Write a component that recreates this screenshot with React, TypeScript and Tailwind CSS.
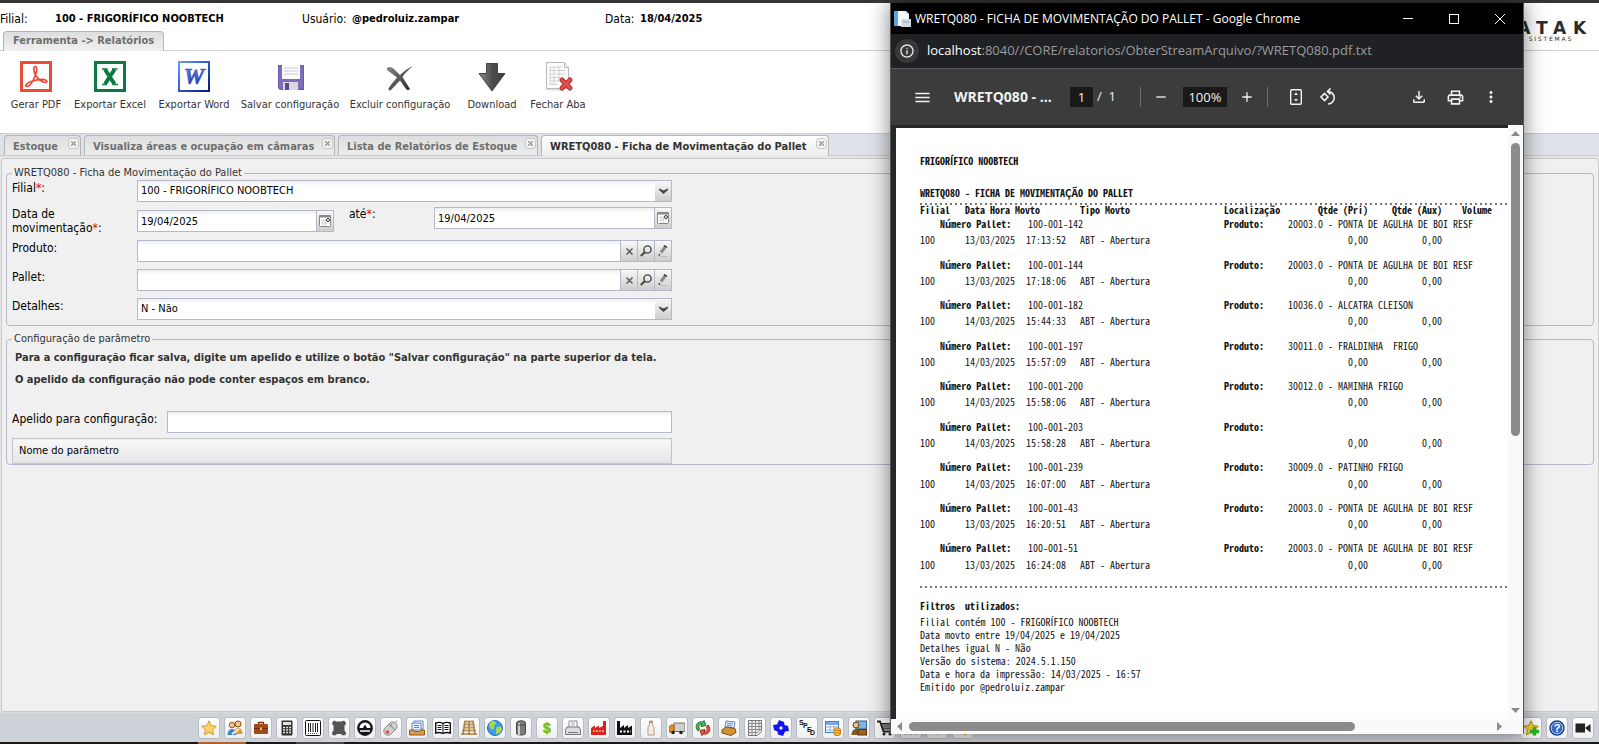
import React from 'react';
import { MdOutlinePrint, MdOutlineFileDownload, MdMoreVert, MdMenu, MdAdd, MdRemove, MdInfoOutline } from 'react-icons/md';

type Kids = { children?: React.ReactNode };

const ui = "font-['DejaVu_Sans_Condensed','Noto_Sans',sans-serif]";
const segoe = "font-['Open_Sans','Noto_Sans',sans-serif]";
const mono = "font-['Noto_Sans_Mono_CJK_JP','DejaVu_Sans_Mono',monospace]";

/* ---------- toolbar drawings ---------- */

const PdfIcon = () => (
  <svg className="size-8" viewBox="0 0 32 32" fill="none">
    <rect x="1.5" y="1.5" width="29" height="28" fill="#fff" stroke="#ea4b37" strokeWidth="3" />
    <path d="M15.5 14c-2-4-2.500-8.500-.3-8.500s1.800 4.500.3 8.500c-2 5-5.500 11.500-8.500 11.500-2.500 0-1-3.500 4-5s12-2.500 14.500-1.500 1.200 3.200-1.500 2.200c-3.500-1.200-6.500-4-8.500-7.200z" stroke="#ea4b37" strokeWidth="1.700" />
  </svg>
);
const ExcelIcon = () => (
  <svg className="size-8" viewBox="0 0 32 32" fill="none">
    <rect x="1.500" y="1.500" width="29" height="28" fill="#fff" stroke="#0b7a41" strokeWidth="3" />
    <path d="M11 8.500l9.500 14.500M20.500 8.500L11 23" stroke="#0b7a41" strokeWidth="4" />
    <path d="M8 8h5.500M18 8h5.500M8 23.500h5M18.500 23.500H24" stroke="#0b7a41" strokeWidth="1.500" />
  </svg>
);
const WordIcon = () => (
  <svg className="size-8" viewBox="0 0 32 32">
    <defs>
      <linearGradient id="wd" x1="0" y1="0" x2="1" y2="1">
        <stop offset="0" stopColor="#6a95ff" />
        <stop offset="1" stopColor="#00188c" />
      </linearGradient>
      <linearGradient id="wt" x1="0" y1="0" x2="0" y2="1">
        <stop offset="0" stopColor="#6f95e8" />
        <stop offset="1" stopColor="#1530a8" />
      </linearGradient>
    </defs>
    <rect x="1" y="1" width="30" height="29" fill="#fff" stroke="url(#wd)" strokeWidth="2" />
    <text x="16" y="23" textAnchor="middle" fontFamily="Liberation Serif" fontWeight="700" fontStyle="italic" fontSize="23" fill="url(#wt)" stroke="#2444b8" strokeWidth=".6">W</text>
  </svg>
);
const SaveIcon = () => (
  <svg className="size-8" viewBox="0 0 32 32">
    <path d="M4 4h26v25H6l-2-2z" fill="#6c5aa6" />
    <path d="M5 5h24v23H6.500L5 26.500z" fill="#7f6cba" />
    <rect x="8" y="4" width="18" height="14" fill="#fbfbfd" />
    <path d="M10 7h14M10 10h14M10 13h14" stroke="#c9c9d3" />
    <rect x="9" y="21" width="15" height="8" fill="#d8d8de" />
    <rect x="11" y="22" width="4" height="7" fill="#5a4a92" />
  </svg>
);
const DeleteIcon = () => (
  <svg className="size-8" viewBox="0 0 32 32">
    <defs>
      <linearGradient id="dx" x1="0" y1="0" x2="1" y2="1">
        <stop offset="0" stopColor="#8a8a8a" />
        <stop offset="1" stopColor="#262626" />
      </linearGradient>
    </defs>
    <path d="M3 7c2-2 5-1 7 1l6 6c4-4 8-7 13-9-4 3-8 7-10.500 11L26 28c-1 1.500-3 1.500-4 0l-6-8.500C12.500 23 10 26 7 29c-1.500 1-3 0-2.500-1.500C7 23.500 10 20 13 16.500L3 9z" fill="url(#dx)" />
  </svg>
);
const DownloadIcon = () => (
  <svg className="size-8" viewBox="0 0 32 32">
    <defs>
      <linearGradient id="dl" x1="0" y1="0" x2="1" y2="0">
        <stop offset="0" stopColor="#8c8c8c" />
        <stop offset=".5" stopColor="#4e4e4e" />
        <stop offset="1" stopColor="#3c3c3c" />
      </linearGradient>
    </defs>
    <path d="M10.500 2.500h11v10H29L16 30 3 12.500h7.500z" fill="url(#dl)" stroke="#444" />
  </svg>
);
const CloseTabIcon = () => (
  <svg className="size-8" viewBox="0 0 32 32">
    <path d="M1 29q12-4 22 1z" fill="#ddd" />
    <path d="M4.500 1.500h18l4 5v21h-22z" fill="#fdfdfd" stroke="#b9b9b9" />
    <path d="M22.500 1.500v5h4" fill="#eee" stroke="#b9b9b9" />
    <path d="M8 6h12M8 9.500h15M8 13h15M8 16.500h10M8 20h9M8 23.500h8M8 6v18M12 6v18M17 6v14" stroke="#d0d0d0" fill="none" />
    <path d="M20 19l8 8M28 19l-8 8" stroke="#b52a2a" strokeWidth="5" strokeLinecap="round" />
    <path d="M20 19l8 8M28 19l-8 8" stroke="#e05252" strokeWidth="3" strokeLinecap="round" />
  </svg>
);

/* ---------- dock drawings (16 x 16) ---------- */

const dock: [string, React.ReactNode][] = [
  ['Favoritos', <path d="M8 .8l2.200 4.800 5.200.6-3.900 3.500 1.100 5.200L8 12.300l-4.600 2.600 1.100-5.200L.6 6.200l5.200-.6z" fill="#fbd36b" stroke="#e0962e" />],
  ['Pessoas', <><circle cx="5" cy="5" r="2.800" fill="#f2c48e" stroke="#8a5a22" /><path d="M.5 15c0-8 9-8 9 0z" fill="#3f82d8" /><circle cx="11" cy="4" r="3" fill="#f2c48e" stroke="#8a4a12" /><path d="M7 14c0-8 8.500-8 8.500 0z" fill="#e09a2c" /><path d="M5 14l7-5" stroke="#f7efe0" strokeWidth="2" /></>],
  ['Maleta', <><path d="M5.500 4V2.500h5V4" fill="none" stroke="#7a3210" strokeWidth="1.300" /><rect x="1" y="4" width="14" height="10" rx="1" fill="#a04a1c" /><path d="M1 8.500h14" stroke="#6f2c0c" /><rect x="7" y="7.500" width="2" height="2.500" fill="#f0c060" /></>],
  ['Calculadora', <><rect x="2.500" y=".5" width="11" height="15" rx="1" fill="#333" /><rect x="4" y="2" width="8" height="3" fill="#dfe5df" /><path d="M4 7.500h8M4 10h8M4 12.500h8" stroke="#ddd" strokeWidth="1.500" strokeDasharray="2 1" /></>],
  ['Código de barras', <><rect x=".5" y=".5" width="15" height="15" rx="1" fill="#fff" stroke="#111" /><path d="M3.500 3v9M5.500 3v9M8 3v9M10.500 3v9M12.500 3v9" stroke="#222" /><path d="M3 13.500h10" stroke="#555" strokeDasharray="1 1" /></>],
  ['Couro', <path d="M3 .5l2.500 1h5l2.500-1 1.500 1.500.5 2-1.500 1.500v5l1.500 2-.5 2.500-2.500.5-2-1.500h-4L4 15.500 1.500 15 1 12.500l1.500-2v-5L1 4l.5-2z" fill="#555" />],
  ['Atak', <><circle cx="8" cy="8" r="7.900" fill="#161616" /><path d="M2.500 8a5.500 5.500 0 0 1 11 0z" fill="#fff" /><path d="M5 9.500l3-5 3 5z" fill="#161616" /><path d="M3 11h10" stroke="#fff" strokeWidth="1.500" /></>],
  ['Mouse', <><path d="M14 .5l-2 3" stroke="#999" /><path d="M1.500 8.500l6-6c4-2 8 2 6 6l-6 6c-4 2.500-8.500-2-6-6z" fill="#cfcfcf" stroke="#8a8a8a" /><path d="M6 4l6 6M9 3.500L7 7" stroke="#8a8a8a" /><circle cx="4.500" cy="12" r="1.800" fill="#d94a4a" /></>],
  ['Documentos', <><path d="M5 1h9v8H5z" fill="#fff" stroke="#5b86c4" /><path d="M3 3h9v7H3z" fill="#e8f1fc" stroke="#5b86c4" /><path d="M5 5.500h5M5 7.500h5" stroke="#5b86c4" /><path d="M.5 10h4l1 1.500h5L12 10h3.500v5H.5z" fill="#d69b48" stroke="#8e5a1b" /></>],
  ['Livro', <><path d="M.7 3c3-1 5-1 7.300.5C10.300 2 12.500 2 15.300 3v10c-3-1-5-.7-7.300.5C5.700 12.300 3.500 12 .7 13z" fill="#fff" stroke="#111" strokeWidth="1.400" /><path d="M8 3.500v10M2.500 5.500h4M2.500 7.500h4M2.500 9.500h4M9.500 5.500h4M9.500 7.500h4M9.500 9.500h4" stroke="#111" /></>],
  ['Pallet', <><path d="M3 1.500h10M2.500 4.500h11M2 7.500h12M1 10.500h14M0 14h16" stroke="#c19a63" strokeWidth="2.200" fill="none" /><path d="M4 1L2 15M8 1v14M12 1l2 14" stroke="#a37d48" strokeWidth="1.400" fill="none" /></>],
  ['Mundo', <><circle cx="8" cy="8" r="7.500" fill="#3d9be9" stroke="#2a6fb8" /><path d="M3 3c3-3 6-2 6 0s-3 2-2 4-2 3-3 2-3-3-1-6zM10 7c3-1 5 0 5 2s-3 5-5 5-1-2-1-3 0-3 1-4z" fill="#a7d948" /></>],
  ['Barril', <><path d="M3.500 3v10.500c0 2 9 2 9 0V3c0-3-9-3-9 0z" fill="#7b7b7b" stroke="#4a4a4a" /><path d="M6 3v12" stroke="#cfcfcf" strokeWidth="2" /><path d="M3.500 4c1 1.500 8 1.500 9 0" stroke="#4a4a4a" fill="none" /></>],
  ['Financeiro', <text x="8" y="13" textAnchor="middle" fontFamily="Liberation Sans" fontWeight="700" fontSize="14" fill="#6cc020" stroke="#6cc020" strokeWidth=".5">$</text>],
  ['Impressora', <><path d="M4 7V1h8v6" fill="#fff" stroke="#888" /><path d="M6 3h4M6 5h4" stroke="#aaa" /><path d="M2 7h12l1.500 3v4.500H.5V10z" fill="#ddd" stroke="#777" /><path d="M3 12.500h10" stroke="#777" /></>],
  ['Fábrica', <><path d="M0 15V8l4-2.500V8l4-2.500V8l4-2V1h3v14z" fill="#d8241c" /><path d="M2 11h11" stroke="#ffb5a8" strokeWidth="1.500" strokeDasharray="2 1" /></>],
  ['Indústria', <><path d="M0 15V1h3v7l4-3v3l4-3v3l4-2.500V15z" fill="#111" /><path d="M3 11.500h11" stroke="#fff" strokeWidth="2" strokeDasharray="2 1.500" /></>],
  ['Garrafa', <><path d="M6.500 1h3v4l1.500 2v8H5V7l1.500-2z" fill="#f6ece4" stroke="#b59a88" /><path d="M6.500 1h3v2h-3z" fill="#c98d72" /></>],
  ['Caminhão', <><rect x="5" y="3" width="11" height="8.500" fill="#cfcfcf" stroke="#777" /><path d="M0 12V7l2-2h3v7z" fill="#e88f1c" stroke="#a8610c" /><circle cx="4" cy="12.500" r="1.800" fill="#222" /><circle cx="12" cy="12.500" r="1.800" fill="#222" /></>],
  ['Atualizar', <><path d="M3 11C-1 6 2 1 8 2l1-1.500 2 5-5 1 1-2C4 4 3 6 4.500 9z" fill="#4cb956" stroke="#21742c" /><path d="M13 5c4 5 1 10-5 9l-1 1.500-2-5 5-1-1 2c3 .5 4-1.500 2.500-4.500z" fill="#ea5548" stroke="#9c2a20" /></>],
  ['Caixa', <><path d="M5 1l9 1-1 6-9-1z" fill="#e6f0fb" stroke="#5a86bd" /><path d="M6 3.500l6 .5M6 5.500l5 .5" stroke="#5a86bd" /><path d="M1 10l4-3 9 1.500 1 4-5 3L1 13z" fill="#d19335" stroke="#7f4f12" /></>],
  ['Planilha', <><path d="M1.500.5h13v11l-4 4h-9z" fill="#ececec" stroke="#777" /><path d="M2 3.500h12M2 6.500h12M2 9.500h12M2 12.500h9M5 1v14M8.500 1v14M12 1v11" stroke="#8c8c8c" /></>],
  ['Fluxo', <path d="M6 0l5 2 .5 3L15 6l1 5-4 .5L10 16l-5-1.500-.5-3L1 10 0 5l4-.5zM8 6L6 8l2 2 2-2z" fill="#1414f0" fillRule="evenodd" />],
  ['SPED', <g fontFamily="Liberation Sans" fontWeight="700" fontSize="7" fill="#111"><text x="0" y="5">S</text><text x="4" y="8">P</text><text x="8" y="11.500">E</text><text x="11" y="15">D</text></g>],
  ['Tabela', <><rect x=".5" y="1.500" width="13" height="11" fill="#fff" stroke="#3f7fc6" /><path d="M1 3.500h12" stroke="#5a9be0" strokeWidth="2.500" /><path d="M1 7h12M1 10h12M5 2v10M9 2v10" stroke="#8db6e2" /><rect x="9" y="8" width="6.500" height="7.500" rx="2" fill="#f4bc4b" stroke="#c98217" /><path d="M9 10.500h6M9 13h6" stroke="#c98217" /></>],
  ['Gerente', <><rect x="5" y="1" width="10.500" height="8" fill="#7db8ea" stroke="#38618c" /><circle cx="5" cy="5" r="3" fill="#eebd85" stroke="#6d3d10" /><path d="M.5 15c0-8 9-8 9 0z" fill="#7a5a2c" /><rect x="7" y="9.500" width="8.500" height="5.500" fill="#a8641f" stroke="#5c3108" /></>],
  ['Carrinho', <><path d="M0 1.500h3l3.500 10h8" fill="none" stroke="#222" strokeWidth="1.800" /><path d="M4 3.500h11.500L14 9H6z" fill="#777" stroke="#222" /><circle cx="7" cy="14" r="1.500" fill="#222" /><circle cx="13" cy="14" r="1.500" fill="#222" /></>],
  ['Grade', <path d="M1 13h3M6 13h3M11 13h3M1 8h14" stroke="#555" strokeWidth="2.500" />],
  ['Pino', <path d="M8 15L5 8h6z" fill="#777" />],
  ['Carteira', <><path d="M2 13l4-3" stroke="#d44" strokeWidth="3" /><path d="M9 14l5-3" stroke="#e90" strokeWidth="3" /></>],
];

const dockRight: [string, React.ReactNode][] = [
  ['Adicionar favorito', <><path d="M8 .8l2.200 4.800 5.200.6-3.900 3.500 1.100 5.200L8 12.300l-4.600 2.600 1.100-5.200L.6 6.200l5.200-.6z" fill="#f2d12c" stroke="#b08a10" /><path d="M11.500 7v8.500M7 11.500h9" stroke="#2fae2a" strokeWidth="3.500" /></>],
  ['Ajuda', <><circle cx="8" cy="8" r="7" fill="#3767c4" stroke="#1d3f86" strokeWidth="1.500" /><circle cx="8" cy="8" r="5.800" fill="none" stroke="#b9cdf2" /><text x="8" y="12" textAnchor="middle" fontFamily="Liberation Sans" fontWeight="700" fontSize="11" fill="#fff">?</text></>],
  ['Vídeo', <path d="M.5 3.500h9.500v9H.5zM10 8l5.500-4v8.500z" fill="#222" />],
];

const DockButton = ({ name, children }: Kids & { name: string }) => (
  <button aria-label={name} className="flex size-[22px] shrink-0 items-center justify-center rounded-[3px] border border-[#b9bcc2] bg-linear-to-b from-white to-[#efefef]">
    <svg className="size-4" viewBox="0 0 16 16" fill="none">{children}</svg>
  </button>
);

/* ---------- form parts ---------- */

const field = 'h-[22px] border border-[#b5b8c8] bg-linear-to-b from-[#eceff0] via-white via-25% to-white px-[3px] text-[11px] text-black outline-none';
const trigger = 'flex h-[22px] w-[17px] shrink-0 items-center justify-center border border-l-0 border-[#b5b8c8] bg-linear-to-b from-[#f8f8f8] to-[#cdcdcd]';

const Req = () => <span className="text-red-600">*</span>;

const Row = ({ id, label, children }: Kids & { id: string; label: string }) => (
  <div className="mb-[7px] flex">
    <label htmlFor={id} className="w-[125px] shrink-0 text-xs leading-4 text-black">{label}:</label>
    <div className="flex w-[535px]">{children}</div>
  </div>
);

const Combo = ({ id, value }: { id: string; value: string }) => (
  <div className="relative flex w-full">
    <select id={id} className={`${field} w-full appearance-none pr-5`}>
      <option>{value}</option>
    </select>
    <span className={`${trigger} pointer-events-none absolute right-0 border-l`}>
      <svg className="size-[9px]" viewBox="0 0 9 9"><path d="M0 1.500l4.500 2 4.500-2V3L4.500 7 0 3z" fill="#444" /></svg>
    </span>
  </div>
);

const CalendarButton = ({ name }: { name: string }) => (
  <button aria-label={name} className={trigger}>
    <svg className="size-3" viewBox="0 0 12 12" fill="none">
      <rect x=".5" y=".5" width="11" height="11" rx="1" fill="#fff" stroke="#888" />
      <path d="M0 1.500h12" stroke="#888" strokeWidth="2" />
      <path d="M2 5.500h8M2 8h8M4 4v7M6.500 4v7" stroke="#d5d5d5" />
      <circle cx="9" cy="5" r="1.500" fill="#fff" stroke="#333" />
    </svg>
  </button>
);

const Lookup = ({ id }: { id: string }) => (
  <>
    <input id={id} className={`${field} min-w-0 grow`} />
    <button aria-label={`Limpar ${id}`} className={trigger}>
      <svg className="size-[7px]" viewBox="0 0 7 7"><path d="M.5.5l6 6M6.500.5l-6 6" stroke="#555" strokeWidth="1.400" /></svg>
    </button>
    <button aria-label={`Pesquisar ${id}`} className={trigger}>
      <svg className="size-3" viewBox="0 0 12 12" fill="none"><circle cx="7.500" cy="4.500" r="3.600" stroke="#444" strokeWidth="1.400" /><path d="M5 7L.8 11" stroke="#444" strokeWidth="2" /></svg>
    </button>
    <button aria-label={`Editar ${id}`} className={trigger}>
      <svg className="size-3" viewBox="0 0 12 12" fill="none"><path d="M3 11.500h7" stroke="#bbb" /><path d="M8.500 1.500L4 7.500" stroke="#888" strokeWidth="3" /><path d="M7 .500l3 2" stroke="#333" strokeWidth="1.500" /><path d="M1.500 11l.5-2.500L3.500 10z" fill="#222" /></svg>
    </button>
  </>
);

const tabs = [
  { text: 'Estoque', width: 'w-[77px]' },
  { text: 'Visualiza áreas e ocupação em câmaras', width: 'w-[251px]' },
  { text: 'Lista de Relatórios de Estoque', width: 'w-[200px]' },
  { text: 'WRETQ080 - Ficha de Movimentação do Pallet', width: 'w-[288px]', active: true },
];

const tools: [string, React.ReactNode][] = [
  ['Gerar PDF', <PdfIcon />],
  ['Exportar Excel', <ExcelIcon />],
  ['Exportar Word', <WordIcon />],
  ['Salvar configuração', <SaveIcon />],
  ['Excluir configuração', <DeleteIcon />],
  ['Download', <DownloadIcon />],
  ['Fechar Aba', <CloseTabIcon />],
];

/* ---------- report window ---------- */

const pallets = [
  ['100-001-142', '20003.0 - PONTA DE AGULHA DE BOI RESF', '13/03/2025', '17:13:52'],
  ['100-001-144', '20003.0 - PONTA DE AGULHA DE BOI RESF', '13/03/2025', '17:18:06'],
  ['100-001-182', '10036.0 - ALCATRA CLEISON', '14/03/2025', '15:44:33'],
  ['100-001-197', '30011.0 - FRALDINHA  FRIGO', '14/03/2025', '15:57:09'],
  ['100-001-200', '30012.0 - MAMINHA FRIGO', '14/03/2025', '15:58:06'],
  ['100-001-203', '', '14/03/2025', '15:58:28'],
  ['100-001-239', '30009.0 - PATINHO FRIGO', '14/03/2025', '16:07:00'],
  ['100-001-43', '20003.0 - PONTA DE AGULHA DE BOI RESF', '13/03/2025', '16:20:51'],
  ['100-001-51', '20003.0 - PONTA DE AGULHA DE BOI RESF', '13/03/2025', '16:24:08'],
];

const filters = [
  'Filial contém 100 - FRIGORÍFICO NOOBTECH',
  'Data movto entre 19/04/2025 e 19/04/2025',
  'Detalhes igual N - Não',
  'Versão do sistema: 2024.5.1.150',
  'Data e hora da impressão: 14/03/2025 - 16:57',
  'Emitido por @pedroluiz.zampar',
];

const Dots = () => <div aria-hidden className="h-0.5 bg-[linear-gradient(to_right,#777_2px,transparent_2px)] bg-size-[5px_2px] bg-repeat-x" />;

const Report = () => (
  <div className={`${mono} min-w-0 grow overflow-hidden bg-white pl-6 text-[10px] text-[#111]`}>
    <p className="mt-[25px] h-4 leading-4 font-bold">FRIGORÍFICO NOOBTECH</p>
    <p className="mt-4 h-4 leading-4 font-bold">WRETQ080 - FICHA DE MOVIMENTAÇÃO DO PALLET</p>
    <div className="mt-0.5"><Dots /></div>
    <table className="h-[378px] w-[588px] table-fixed border-collapse text-left leading-3">
      <colgroup>
        <col className="w-[45px]" />
        <col className="w-[61px]" />
        <col className="w-[54px]" />
        <col className="w-36" />
        <col className="w-16" />
        <col className="w-20" />
        <col className="w-[74px]" />
        <col />
      </colgroup>
      <thead>
        <tr className="h-[13px] align-top leading-[10px]">
          <th className="p-0">Filial</th>
          <th className="p-0" colSpan={2}>Data Hora Movto</th>
          <th className="p-0">Tipo Movto</th>
          <th className="p-0">Localização</th>
          <th className="p-0 text-right">Qtde (Pri)</th>
          <th className="p-0 text-right">Qtde (Aux)</th>
          <th className="p-0 pl-5">Volume</th>
        </tr>
      </thead>
      <tbody>
        {pallets.map(([number, product, date, time]) => (
          <React.Fragment key={number}>
            <tr className="h-4 align-top">
              <th className="p-0 pl-5" colSpan={2}>Número Pallet:</th>
              <td className="p-0 pl-0.5" colSpan={2}>{number}</td>
              <th className="p-0">Produto:</th>
              <td className="p-0 whitespace-pre" colSpan={3}>{product}</td>
            </tr>
            <tr className="h-6 align-top">
              <td className="p-0">100</td>
              <td className="p-0">{date}</td>
              <td className="p-0">{time}</td>
              <td className="p-0">ABT - Abertura</td>
              <td className="p-0" />
              <td className="p-0 text-right">0,00</td>
              <td className="p-0 text-right">0,00</td>
              <td className="p-0" />
            </tr>
          </React.Fragment>
        ))}
      </tbody>
    </table>
    <div className="mt-[3px]"><Dots /></div>
    <p className="mt-[10px] h-[17px] leading-4 font-bold whitespace-pre">Filtros  utilizados:</p>
    <div className="leading-[13px]">
      {filters.map((line) => <p key={line}>{line}</p>)}
    </div>
  </div>
);

const iconBtn = 'flex w-6 shrink-0 items-center justify-center';

const PopupWindow = () => (
  <section className={`${segoe} absolute top-[3px] right-[75px] bottom-[10px] flex w-[634px] flex-col overflow-hidden border-x border-[#555] bg-[#282828] shadow-[0_0_20px_rgba(0,0,0,0.5)]`}>
    <header className="flex h-[31px] shrink-0 items-center bg-black text-xs text-white">
      <svg className="ml-[3px] h-4 w-[17px]" viewBox="0 0 17 16"><rect width="5" height="15" fill="#5aa6dc" /><path d="M4 0h8l3 3v12H4z" fill="#f5f7f9" /><path d="M8 8h9v8H7z" fill="#cfd8e0" /><path d="M9 11h6" stroke="#8fa3b3" /></svg>
      <h1 className="ml-1 whitespace-nowrap">WRETQ080 - FICHA DE MOVIMENTAÇÃO DO PALLET - Google Chrome</h1>
      <div className="ml-auto flex">
        <button aria-label="Minimizar" className="flex w-[46px] items-center justify-center"><svg className="size-[10px]" viewBox="0 0 10 10"><path d="M0 4.500h10" stroke="#fff" /></svg></button>
        <button aria-label="Maximizar" className="flex w-[46px] items-center justify-center"><svg className="size-[10px]" viewBox="0 0 10 10" fill="none"><rect x=".5" y=".5" width="9" height="9" stroke="#fff" /></svg></button>
        <button aria-label="Fechar" className="flex w-[46px] items-center justify-center"><svg className="size-[10px]" viewBox="0 0 10 10"><path d="M0 0l10 10M10 0L0 10" stroke="#fff" /></svg></button>
      </div>
    </header>
    <div className="flex h-[35px] shrink-0 items-center border-b border-[#5a5a5a] bg-[#202124] pl-1">
      <span className="flex size-6 items-center justify-center rounded-full bg-[#37383a] text-[#e8e8e8]"><MdInfoOutline className="size-4" /></span>
      <p className="ml-2 text-[13px] whitespace-nowrap text-[#9a9b9d]"><span className="text-white">localhost</span>:8040//CORE/relatorios/ObterStreamArquivo/?WRETQ080.pdf.txt</p>
    </div>
    <div className="flex h-14 shrink-0 items-center bg-[#3c3c3c] pl-[19px] text-[#f1f1f1]">
      <button aria-label="Menu" className={iconBtn}><MdMenu className="size-[19px]" /></button>
      <h2 className="ml-5 w-[106px] truncate text-sm font-bold">WRETQ080 - ...</h2>
      <input aria-label="Página" defaultValue="1" className="ml-[10px] h-5 w-[23px] bg-[#191919] text-center text-[13px]" />
      <span className="ml-1 text-[13px] whitespace-pre">/  1</span>
      <span className="ml-6 h-5 w-px bg-[#6e6e6e]" />
      <button aria-label="Diminuir zoom" className={`${iconBtn} ml-2`}><MdRemove className="size-4" /></button>
      <input aria-label="Zoom" defaultValue="100%" className="ml-2.5 h-5 w-11 bg-[#191919] text-center text-[13px]" />
      <button aria-label="Aumentar zoom" className={`${iconBtn} ml-2`}><MdAdd className="size-4" /></button>
      <span className="ml-2 h-5 w-px bg-[#6e6e6e]" />
      <button aria-label="Ajustar à página" className={`${iconBtn} ml-4`}>
        <svg className="size-4" viewBox="0 0 16 16" fill="none"><rect x="2.700" y=".7" width="10.600" height="14.600" rx="1" stroke="currentColor" strokeWidth="1.400" /><path d="M8 3.500l2 2.500H6zM8 12.500l2-2.500H6z" fill="currentColor" /></svg>
      </button>
      <button aria-label="Girar" className={`${iconBtn} ml-2`}>
        <svg className="size-[18px]" viewBox="0 0 18 18" fill="none" stroke="currentColor" strokeWidth="1.600"><path d="M5.500 5.500L9 9l-3.500 3.500L2 9z" /><path d="M9 3.500a6 6 0 1 1 0 12.500" /><path d="M11.500.500l-3 3 3 3" /></svg>
      </button>
      <div className="mr-5 ml-auto flex gap-3">
        <button aria-label="Baixar" className={iconBtn}><MdOutlineFileDownload className="size-[18px]" /></button>
        <button aria-label="Imprimir" className={iconBtn}><MdOutlinePrint className="size-[19px]" /></button>
        <button aria-label="Mais opções" className={iconBtn}><MdMoreVert className="size-[18px]" /></button>
      </div>
    </div>
    <div className="flex min-h-0 grow">
      <div className="flex min-w-0 grow pt-[3px] pl-[5px]"><Report /></div>
      <div className="flex w-[15px] shrink-0 flex-col items-center bg-[#fafafa] py-1.5">
        <svg className="h-[5px] w-[9px] shrink-0" viewBox="0 0 9 5"><path d="M0 5l4.500-5L9 5z" fill="#8a8a8a" /></svg>
        <div className="mt-[7px] h-[293px] w-[9px] rounded-full bg-[#8b8b8b]" />
        <svg className="mt-auto h-[5px] w-[9px] shrink-0" viewBox="0 0 9 5"><path d="M0 0h9L4.500 5z" fill="#8a8a8a" /></svg>
      </div>
    </div>
    <div className="flex h-[15px] shrink-0 items-center bg-[#fafafa] pr-[21px] pl-[6px]">
      <svg className="h-[9px] w-[5px]" viewBox="0 0 5 9"><path d="M5 0v9L0 4.500z" fill="#8a8a8a" /></svg>
      <div className="ml-[7px] h-[9px] w-[446px] rounded-full bg-[#8b8b8b]" />
      <svg className="ml-auto h-[9px] w-[5px]" viewBox="0 0 5 9"><path d="M0 0v9l5-4.500z" fill="#8a8a8a" /></svg>
    </div>
  </section>
);

/* ---------- page ---------- */

export default function App() {
  return (
    <div className={`${ui} relative flex h-screen flex-col overflow-hidden bg-white text-[11px] text-[#333]`}>
      <div className="h-[3px] shrink-0 bg-[#363434]" />

      <header className="flex h-7 shrink-0 items-start text-[12px] leading-[32px] whitespace-nowrap text-black">
        <p className="flex w-[302px]"><span className="w-[55px]">Filial:</span><b className="text-[11px]">100 - FRIGORÍFICO NOOBTECH</b></p>
        <p className="flex w-[303px]"><span className="w-[50px]">Usuário:</span><b className="text-[11px]">@pedroluiz.zampar</b></p>
        <p className="flex"><span className="w-[35px]">Data:</span><b className="text-[11px]">18/04/2025</b></p>
        <div className="mt-[17px] mr-1.5 ml-auto font-['DejaVu_Sans',sans-serif] text-[#2a2b2d]">
          <p className="text-[17px] leading-[16px] font-bold tracking-[0.4em]">ATAK</p>
          <p className="pr-5 text-right text-[6px] leading-[6px] tracking-[0.3em]">SISTEMAS</p>
        </div>
      </header>

      <nav className="flex h-5 shrink-0 border-b border-[#d0d0d0] pl-[3px]">
        <button className="h-5 w-[161px] rounded-t border border-b-0 border-[#b5b5b5] bg-linear-to-b from-[#dedede] to-[#f0f0f0] pl-[9px] text-left font-bold whitespace-nowrap text-[#6f6f6f]">Ferramenta -&gt; Relatórios</button>
      </nav>

      <div className="grid h-[82px] shrink-0 grid-cols-[64px_84px_84px_108px_112px_72px_60px] items-start pt-[10px] pl-1">
        {tools.map(([name, icon]) => (
          <button key={name} className="flex flex-col items-center whitespace-nowrap">
            {icon}
            <span className="mt-1 leading-4">{name}</span>
          </button>
        ))}
      </div>

      <div role="tablist" className="flex h-[23px] shrink-0 gap-[3px] border-y border-[#ccc] bg-[#dfe3e9] pt-px pl-1">
        {tabs.map((t) => (
          <div
            key={t.text}
            className={`${t.width} ${t.active ? '-mb-px bg-linear-to-b from-white to-[#ececec] text-[#333]' : 'bg-linear-to-b from-[#dedede] to-[#ededed] text-[#6f6f6f]'} flex justify-between rounded-t border border-b-0 border-[#b5b5b5] pr-px pl-2 font-bold whitespace-nowrap`}
          >
            <button role="tab" aria-selected={!!t.active} className="leading-[21px]">{t.text}</button>
            <button aria-label={`Fechar ${t.text}`} className="mt-0.5 flex size-[11px] items-center justify-center rounded-[3px] border border-[#c8c8c8] bg-[#f2f2f2]">
              <svg className="size-[5px]" viewBox="0 0 5 5"><path d="M0 0l5 5M5 0L0 5" stroke="#999" strokeWidth="1.300" /></svg>
            </button>
          </div>
        ))}
      </div>

      <main className="flex min-h-0 grow flex-col bg-[#e6e6e6] pt-0.5 pl-px">
        <div className="grow rounded-t border border-[#c9c9c9] bg-[#f0f0f0] pt-[7px] pr-1 pl-1">
          <fieldset className="rounded-[4px] border border-[#b5b8c8] px-[5px]">
            <legend className="px-0.5 leading-[14px]">WRETQ080 - Ficha de Movimentação do Pallet</legend>
            <div className="-mb-[2px]">
              <div className="mb-[5px] flex">
                <label htmlFor="filial" className="w-[125px] shrink-0 text-xs leading-4 text-black">Filial<Req />:</label>
                <div className="flex w-[535px]"><Combo id="filial" value="100 - FRIGORÍFICO NOOBTECH" /></div>
              </div>
              <div className="mb-[5px] flex h-7 items-start">
                <label htmlFor="de" className="w-[125px] shrink-0 text-xs leading-[14px] text-black">Data de<br />movimentação<Req />:</label>
                <div className="mt-[3px] flex w-[197px]">
                  <input id="de" defaultValue="19/04/2025" className={`${field} min-w-0 grow`} />
                  <CalendarButton name="Calendário inicial" />
                </div>
                <label htmlFor="ate" className="ml-[15px] w-[85px] shrink-0 text-xs leading-[14px] text-black">até<Req />:</label>
                <div className="flex w-[238px]">
                  <input id="ate" defaultValue="19/04/2025" className={`${field} min-w-0 grow`} />
                  <CalendarButton name="Calendário final" />
                </div>
              </div>
              <Row id="produto" label="Produto"><Lookup id="produto" /></Row>
              <Row id="pallet" label="Pallet"><Lookup id="pallet" /></Row>
              <Row id="detalhes" label="Detalhes"><Combo id="detalhes" value="N - Não" /></Row>
            </div>
          </fieldset>

          <fieldset className="mt-[6px] rounded-[4px] border border-[#b5b8c8] px-[5px]">
            <legend className="px-0.5 leading-[14px]">Configuração de parâmetro</legend>
            <p className="mt-1 pl-[3px] leading-[16px] font-bold">Para a configuração ficar salva, digite um apelido e utilize o botão &quot;Salvar configuração&quot; na parte superior da tela.</p>
            <p className="mt-1.5 pl-[3px] leading-[16px] font-bold">O apelido da configuração não pode conter espaços em branco.</p>
            <div className="mt-[23px] flex">
              <label htmlFor="apelido" className="w-[155px] shrink-0 text-xs leading-[16px] text-black">Apelido para configuração:</label>
              <input id="apelido" className={`${field} w-[505px]`} />
            </div>
            <table className="mt-[5px] w-[660px] border-collapse">
              <thead>
                <tr>
                  <th className="h-[25px] border border-[#c5c5c5] bg-linear-to-b from-[#f9f9f9] to-[#e3e4e6] p-0 pl-1.5 text-left font-normal text-black">Nome do parâmetro</th>
                </tr>
              </thead>
            </table>
          </fieldset>
        </div>
      </main>

      <footer className="flex h-[30px] shrink-0 gap-1 border-t border-[#d8dbe0] bg-[#cdd1d8] pt-1 pr-[5px] pl-[198px]">
        {dock.map(([name, icon]) => <DockButton key={name} name={name}>{icon}</DockButton>)}
        <div className="ml-auto flex gap-1">
          {dockRight.map(([name, icon]) => <DockButton key={name} name={name}>{icon}</DockButton>)}
        </div>
      </footer>
      <div className="flex h-0.5 shrink-0 bg-[#1c1818] pl-[198px]">
        <div className="w-12 bg-[#b0622c]" />
        <div className="ml-[50px] w-12 bg-[#4a4646]" />
      </div>

      <PopupWindow />
    </div>
  );
}
